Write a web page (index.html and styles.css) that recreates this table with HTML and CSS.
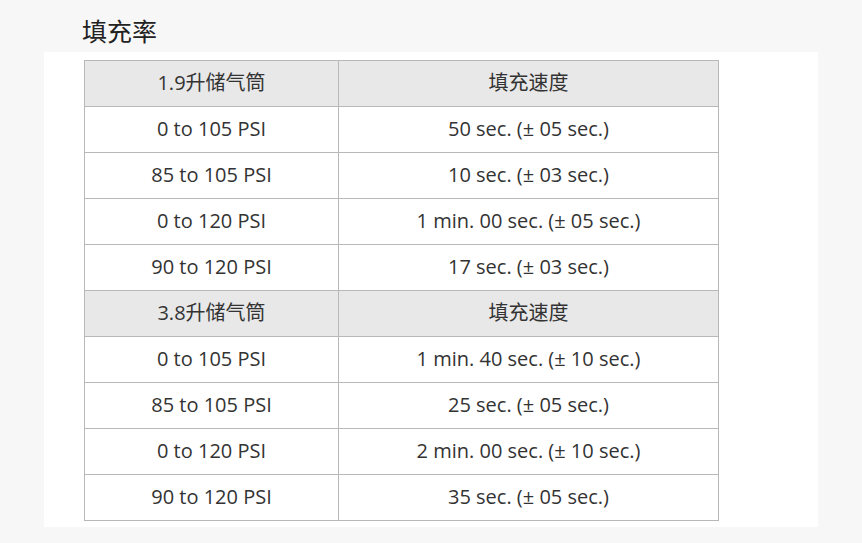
FILE: index.html
```html
<!DOCTYPE html>
<html lang="zh">
<head>
<meta charset="utf-8">
<link rel="stylesheet" href="styles.css">
</head>
<body>
<h2 class="title">填充率</h2>
<div class="panel">
  <table class="rates">
    <colgroup><col class="c1"><col class="c2"></colgroup>
    <tr class="head"><td>1.9升储气筒</td><td>填充速度</td></tr>
    <tr><td>0 to 105 PSI</td><td>50 sec. (± 05 sec.)</td></tr>
    <tr><td>85 to 105 PSI</td><td>10 sec. (± 03 sec.)</td></tr>
    <tr><td>0 to 120 PSI</td><td>1 min. 00 sec. (± 05 sec.)</td></tr>
    <tr><td>90 to 120 PSI</td><td>17 sec. (± 03 sec.)</td></tr>
    <tr class="head"><td>3.8升储气筒</td><td>填充速度</td></tr>
    <tr><td>0 to 105 PSI</td><td>1 min. 40 sec. (± 10 sec.)</td></tr>
    <tr><td>85 to 105 PSI</td><td>25 sec. (± 05 sec.)</td></tr>
    <tr><td>0 to 120 PSI</td><td>2 min. 00 sec. (± 10 sec.)</td></tr>
    <tr><td>90 to 120 PSI</td><td>35 sec. (± 05 sec.)</td></tr>
  </table>
</div>
</body>
</html>
```
FILE: styles.css
```css
html, body {
  margin: 0;
  padding: 0;
  background: #f7f7f7;
}
body {
  font-family: "Open Sans", "Noto Sans CJK SC", sans-serif;
  color: #333;
}
.title {
  margin: 0;
  padding: 15px 0 0 82px;
  height: 37px;
  box-sizing: content-box;
  font-size: 25px;
  line-height: 32px;
  font-weight: 400;
  color: #222;
}
.panel {
  margin-left: 44px;
  width: 734px;
  background: #fff;
  padding: 8px 0 6px 40px;
}
.rates {
  border-collapse: collapse;
  width: 634px;
  table-layout: fixed;
}
.c1 { width: 254px; }
.c2 { width: 380px; }
.rates td {
  border: 1px solid #b8b8b8;
  height: 45px;
  padding: 0 0 2px;
  text-align: center;
  font-size: 20px;
  line-height: 24px;
  color: #333;
  box-sizing: border-box;
}
.rates tr { height: 46px; }
.head td {
  background: #e8e8e8;
}
```
